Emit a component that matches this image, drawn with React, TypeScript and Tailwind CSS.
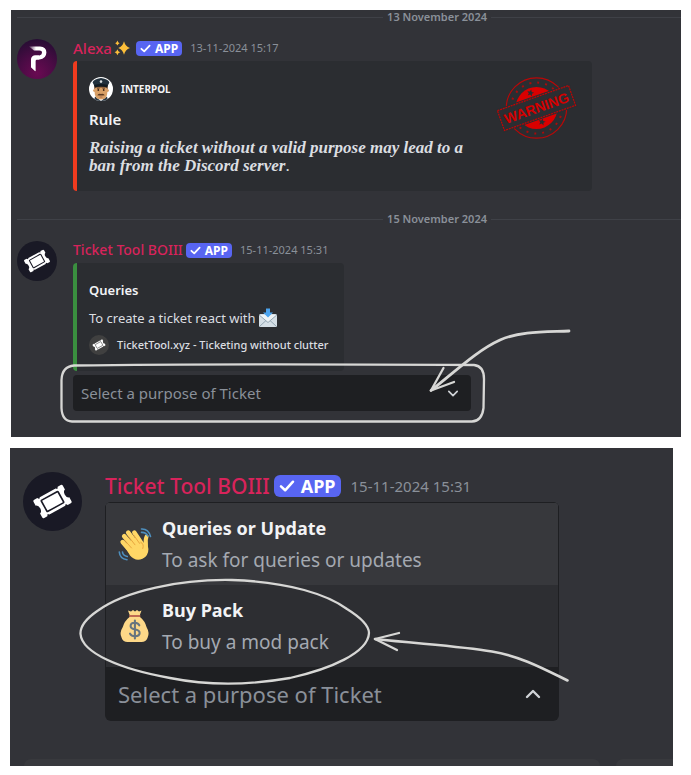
import React from "react";

const sans = "font-['Noto_Sans','Open_Sans',sans-serif]";

function TicketAvatar({ className, bg }: { className: string; bg: string }) {
  return (
    <svg viewBox="0 0 40 40" className={className} aria-hidden="true">
      <circle cx="20" cy="20" r="20" fill={bg} />
      <g transform="rotate(-29 20 20) translate(20 20) scale(0.9) translate(-20 -20)">
        <path
          d="M8.6 12.2H11.2L12.2 13.5L13.2 12.5H26.8L27.8 13.5L28.8 12.2H31.4Q32.6 12.2 32.6 13.4V16.6Q30.6 17.2 30.6 20T32.6 23.4V26.6Q32.6 27.8 31.4 27.8H28.8L27.8 26.5L26.8 27.500H13.2L12.2 26.5L11.2 27.8H8.6Q7.4 27.8 7.4 26.6V23.4Q9.4 22.8 9.4 20T7.4 16.6V13.4Q7.4 12.2 8.6 12.2Z"
          fill="#fff"
        />
        <rect x="12.8" y="15.200" width="14.4" height="9.6" rx="0.6" fill="none" stroke={bg} strokeWidth="1.2" />
      </g>
    </svg>
  );
}

function AlexaAvatar() {
  return (
    <svg viewBox="0 0 40 40" className="size-10 shrink-0" aria-hidden="true">
      <defs>
        <radialGradient id="alexa-bg" cx="0.5" cy="0.85" r="0.85">
          <stop offset="0" stopColor="#6a0a52" />
          <stop offset="0.5" stopColor="#4b0b45" />
          <stop offset="1" stopColor="#260d33" />
        </radialGradient>
        <linearGradient id="alexa-p" x1="0" x2="1" y1="0" y2="0">
          <stop offset="0" stopColor="#fff" stopOpacity="0.15" />
          <stop offset="0.4" stopColor="#fff" />
        </linearGradient>
      </defs>
      <circle cx="20" cy="20" r="20" fill="url(#alexa-bg)" />
      <path d="M12 7.6H23Q29.4 8 29.4 13.6Q29.2 20 22.5 20.4H19.6Q18.4 20.6 18.4 22V32.2L14 28.2V20.5Q14.2 16.6 18 16.4H22.4Q25 16.2 25 13.8T22.4 11.4H17Z" fill="url(#alexa-p)" />
      <path d="M14 28.2V20.5Q14.2 16.6 18 16.4H22V20.4H19.6Q18.4 20.6 18.4 22V32.2Z" fill="#fff" />
    </svg>
  );
}

function Sparkles() {
  return (
    <svg viewBox="0 0 16 16" className="size-4 shrink-0" role="img" aria-label="sparkles">
      <g fill="#fdbf3a">
        <path d="M10 1.200Q11.2 6.2 16 8Q11.2 9.6 10 14.800Q8.8 9.6 4.2 8Q8.8 6.2 10 1.200Z" />
        <path d="M3.4 9.2Q4 11.6 6.2 12.2Q4 12.8 3.4 15.2Q2.8 12.8 0.6 12.2Q2.8 11.6 3.4 9.2Z" />
        <path d="M3.4 0.6Q3.9 2.6 5.6 3.2Q3.9 3.8 3.4 5.6Q2.9 3.8 1.2 3.2Q2.9 2.6 3.4 0.6Z" />
      </g>
    </svg>
  );
}

function Officer() {
  return (
    <svg viewBox="0 0 24 24" className="size-6 shrink-0" aria-hidden="true">
      <clipPath id="officer-clip">
        <circle cx="12" cy="12" r="12" />
      </clipPath>
      <g clipPath="url(#officer-clip)">
        <rect width="24" height="24" fill="#fff" />
        <path d="M6 19.5L12 24L18 19.5L19 24H5Z" fill="#2b3945" />
        <path d="M5.6 9H18.4V15Q18.4 22.6 12 22.6T5.6 15Z" fill="#d9a066" />
        <circle cx="5.4" cy="13.6" r="1.3" fill="#d9a066" />
        <circle cx="18.6" cy="13.6" r="1.3" fill="#d9a066" />
        <path d="M5.4 8H18.6V12.6L17.4 10.6H6.6L5.4 12.6Z" fill="#5d3a22" />
        <path d="M3.6 5.6Q4.2 2 12 1Q19.8 2 20.4 5.6L18.8 8.6H5.2Z" fill="#22313d" />
        <path d="M5 8Q12 6 19 8L18.2 10.6Q12 8.6 5.8 10.6Z" fill="#111b23" />
        <circle cx="12" cy="4.6" r="1.3" fill="#d8dde0" />
        <circle cx="9.3" cy="13" r="0.9" fill="#3a2417" />
        <circle cx="14.7" cy="13" r="0.9" fill="#3a2417" />
        <path d="M8 11.3H10.6M13.4 11.3H16" stroke="#5d3a22" strokeWidth="0.8" />
        <path d="M8.2 18.2Q10 16.2 12 17Q14 16.2 15.8 18.2Q12 18.8 8.2 18.2Z" fill="#5d3a22" />
        <path d="M10.6 20H13.4" stroke="#a0614a" strokeWidth="0.8" />
      </g>
    </svg>
  );
}

function Star({ x, y }: { x: number; y: number }) {
  return (
    <path
      transform={`translate(${x} ${y}) rotate(12)`}
      d="M0-3.6L1-1.2L3.5-1.1L1.6 0.5L2.2 3L0 1.6L-2.2 3L-1.6 0.5L-3.5-1.1L-1-1.2Z"
      fill="#2b2d31"
    />
  );
}

function WarningStamp() {
  return (
    <svg viewBox="0 0 82 62" className="h-[62px] w-[82px] shrink-0" role="img" aria-label="Warning stamp">
      <circle cx="40.500" cy="31" r="30.200" fill="none" stroke="#b80808" strokeWidth="1.200" />
      <circle cx="40.500" cy="31" r="25.500" fill="none" stroke="#a60c0c" strokeWidth="2" strokeDasharray="2 6.010" />
      <circle cx="40.500" cy="31" r="21" fill="#d90000" />
      <Star x={34.5} y={16} />
      <Star x={46} y={45} />
      <g transform="rotate(-19.500 40.500 31)">
        <rect x="1.500" y="19" width="78" height="24" fill="#2b2d31" />
        <rect x="2.800" y="20.500" width="75.400" height="21" fill="#2b2d31" stroke="#c00505" strokeWidth="1.200" strokeDasharray="2 0.800" />
        <text x="40.500" y="36" textAnchor="middle" fontFamily="Liberation Sans, Arial, sans-serif" fontSize="14" fontWeight="700" fill="#d40000">
          WARNING
        </text>
      </g>
    </svg>
  );
}

function Envelope() {
  return (
    <svg viewBox="0 0 20 20" className="size-5 shrink-0" role="img" aria-label="incoming envelope">
      <rect x="1" y="6" width="18" height="13" rx="1.500" fill="#d5dfe6" />
      <path d="M1.500 18.500L8 12.500M18.500 18.500L12 12.500" stroke="#93a6b3" strokeWidth="1" />
      <path d="M1.200 7L10 14.500L18.800 7" fill="#edf2f5" stroke="#93a6b3" strokeWidth="1" />
      <path d="M8 0.500H12V4.500H15L10 9.500L5 4.500H8Z" fill="#4ba3ee" />
    </svg>
  );
}

function Wave() {
  return (
    <svg viewBox="0 0 34 34" className="size-[34px] shrink-0" aria-hidden="true">
      <g stroke="#ffd766" strokeLinecap="round" fill="none">
        <path d="M4.600 15L14 26" strokeWidth="4.400" />
        <path d="M6.200 9.200L18 23" strokeWidth="4.600" />
        <path d="M10.200 5.600L21 20" strokeWidth="4.600" />
        <path d="M16.300 5.500L24 17" strokeWidth="4.400" />
        <path d="M28.600 9.500Q27 13 27.800 19" strokeWidth="4" />
      </g>
      <path d="M6 18L20 9L25.500 16.500L29.700 13Q29.500 18 30.400 22Q30.500 29 24.500 31.800Q17 34.500 12 28.500Z" fill="#ffd766" />
      <path d="M6.600 13.200L13.500 21M10.500 9.500L17 17.800M15.800 8.200L21.600 16.400M22.800 15.300Q26.500 17 24.800 21.500" stroke="#e5a03a" strokeWidth="0.900" fill="none" strokeLinecap="round" />
      <g stroke="#4e8fbe" strokeWidth="1.600" fill="none" strokeLinecap="round">
        <path d="M23.500 2Q30.500 1.700 32.500 9.500" />
        <path d="M23.500 5.400Q28 5.200 29.800 9" />
        <path d="M1.300 25Q1.800 31.700 9 32.700" />
        <path d="M4.500 25Q5 28.700 9.300 29.500" />
      </g>
    </svg>
  );
}

function MoneyBag() {
  return (
    <svg viewBox="0 0 34 34" className="size-[34px] shrink-0" aria-hidden="true">
      <path d="M10 1.500L13 2.500L15 1L17 2.500L19 1L21 2.500L23.500 1.500L21.500 7H12Z" fill="#fdd888" />
      <path d="M11.500 8H22Q27 12 28.500 18Q32 24 29.500 29Q28 33 23.500 33H9.500Q5 33 3.700 29Q1 24 4.800 18Q6.500 12 11.500 8Z" fill="#fdd888" />
      <rect x="11" y="6" width="11.500" height="2" rx="1" fill="#bf6952" />
      <path d="M21.300 16.300Q20 13.800 16.800 13.800Q12.600 13.800 12.600 17Q12.600 19.500 16.800 20.300Q21.600 21.200 21.600 24Q21.600 27.200 17 27.200Q13.300 27.200 12 24.600M16.900 11.500V29.500" stroke="#67757f" strokeWidth="2.100" fill="none" strokeLinecap="round" />
    </svg>
  );
}

function Check({ className }: { className: string }) {
  return (
    <svg viewBox="0 0 12 12" className={className} aria-hidden="true">
      <path d="M1.500 6.300L4.600 9.200L10.500 2.800" fill="none" stroke="#fff" strokeWidth="1.900" strokeLinecap="round" strokeLinejoin="round" />
    </svg>
  );
}

function Chevron({ className, up }: { className: string; up?: boolean }) {
  return (
    <svg viewBox="0 0 16 10" className={className} aria-hidden="true">
      <path d={up ? "M2 8L8 2L14 8" : "M2 2L8 8L14 2"} fill="none" stroke="#d0d3d7" strokeWidth="2.400" strokeLinecap="round" strokeLinejoin="round" />
    </svg>
  );
}

function AppBadge() {
  return (
    <span className="flex h-[15px] items-center gap-1 rounded-sm bg-[#5865f2] px-1 text-[12px] leading-[15px] font-bold text-white">
      <Check className="size-[11px]" />
      APP
    </span>
  );
}

function DateDivider({ children }: { children: React.ReactNode }) {
  return (
    <div className="ml-1.5 flex h-3.5 items-center gap-1">
      <span className="h-px flex-[368] bg-[#3f4147]" />
      <span className="text-[11px] leading-[14px] font-semibold text-[#8a9099]">{children}</span>
      <span className="h-px flex-[191] bg-[#3f4147]" />
    </div>
  );
}

export default function App() {
  return (
    <main className={`bg-white pt-2.5 pb-2.5 ${sans}`}>
      <section className="relative mr-2.5 ml-[11px] bg-[#323338] pb-[26px]">
        <DateDivider>13 November 2024</DateDivider>

        <article className="mt-[15px] flex gap-4 pl-1.5">
          <AlexaAvatar />
          <div className="min-w-0 flex-1">
            <header className="flex h-[18px] items-center">
              <span className="text-[15px] leading-[18px] font-medium text-[#d8235b]">Alexa</span>
              <span className="ml-0.5"><Sparkles /></span>
              <span className="ml-1.5"><AppBadge /></span>
              <time className="ml-2 text-[11px] leading-[18px] text-[#8a9099]">13-11-2024 15:17</time>
            </header>
            <div className="mt-1 flex max-w-[519px] items-start justify-between rounded border-l-4 border-[#f03b1f] bg-[#2b2d31] py-4 pr-3.5 pl-3">
              <div className="max-w-[392px]">
                <div className="flex items-center gap-2">
                  <Officer />
                  <span className="text-[10px] leading-4 font-bold text-[#f2f3f5]">INTERPOL</span>
                </div>
                <h2 className="mt-2 text-[15px] leading-5 font-semibold text-[#f2f3f5]">Rule</h2>
                <p className="mt-2.5 font-['Liberation_Serif',serif] text-[17px] leading-[18px] text-[#dbdee1]">
                  <strong className="italic">Raising a ticket without a valid purpose may lead to a<br />ban from the Discord server</strong>.
                </p>
              </div>
              <WarningStamp />
            </div>
          </div>
        </article>

        <div className="pt-[21px]">
          <DateDivider>15 November 2024</DateDivider>
        </div>

        <article className="mt-[15px] flex gap-4 pl-1.5">
          <TicketAvatar className="size-10 shrink-0" bg="#191925" />
          <div className="min-w-0 flex-1">
            <header className="flex h-[18px] items-center">
              <span className="text-[14px] leading-[18px] font-medium text-[#d8235b]">Ticket Tool BOIII</span>
              <span className="ml-[3px]"><AppBadge /></span>
              <time className="ml-2 text-[11px] leading-[18px] text-[#8a9099]">15-11-2024 15:31</time>
            </header>
            <div className="mt-1 w-[271px] rounded border-l-4 border-[#3a8f3f] bg-[#2b2d31] pt-4 pr-3 pb-4 pl-3">
              <h2 className="text-[13px] leading-[22px] font-semibold text-[#f2f3f5]">Queries</h2>
              <p className="mt-1.5 flex items-center gap-0.5 text-[13px] leading-[22px] whitespace-nowrap text-[#dbdee1]">
                To create a ticket react with <Envelope />
              </p>
              <div className="mt-1.5 flex items-center gap-2">
                <TicketAvatar className="size-5 shrink-0" bg="#404040" />
                <span className="text-[11px] leading-5 font-medium whitespace-nowrap text-[#dbdee1]">TicketTool.xyz - Ticketing without clutter</span>
              </div>
            </div>
            <div className="mt-1 flex w-[398px] items-center rounded bg-[#1e1f22]">
              <select aria-label="Select a purpose of Ticket" className="h-9 flex-1 appearance-none bg-transparent pl-2 text-[15px] text-[#8a9099] outline-none">
                <option>Select a purpose of Ticket</option>
                <option>Queries or Update</option>
                <option>Buy Pack</option>
              </select>
              <Chevron className="mr-3 h-[7px] w-3" />
            </div>
          </div>
        </article>

        <svg viewBox="11 10 670 426" className="pointer-events-none absolute top-0 left-0 h-[426px] w-[670px]" fill="none" stroke="#d7d7d5" strokeLinecap="round" strokeLinejoin="round" aria-hidden="true">
          <path d="M74 365.500Q220 363.500 474 365Q484 366 484 379L483.500 408Q482 421 472 421.500Q300 422 72 421.500Q62 421 61.500 408V380Q62 366.500 74 365.500Z" strokeWidth="2.300" />
          <path d="M569 331C545 332 520 331 500 340C478 350 458 369 431 390.500" strokeWidth="2.800" />
          <path d="M443.500 368L431 390.500L454 382" strokeWidth="2.300" />
        </svg>
      </section>

      <section className="relative mt-[11px] mr-[18px] ml-2.5 overflow-hidden bg-[#323338] pt-6">
        <article className="flex gap-[23px] pl-[13px]">
          <TicketAvatar className="size-[59px] shrink-0" bg="#191925" />
          <div className="w-[454px]">
            <header className="flex h-7 items-center">
              <span className="text-[21px] leading-7 font-medium text-[#d8235b]">Ticket Tool BOIII</span>
              <span className="ml-1 flex h-[22px] items-center gap-1.5 rounded-md bg-[#5865f2] px-[5px] text-[18px] leading-[22px] font-bold text-white">
                <Check className="size-4" />
                APP
              </span>
              <time className="ml-2.5 text-[15px] leading-7 text-[#8a9099]">15-11-2024 15:31</time>
            </header>
            <div className="mt-0.5 overflow-hidden rounded-md bg-[#1e1f22]">
              <div role="listbox" aria-label="Ticket purposes" className="flex flex-col rounded-t-md border border-b-0 border-[#1e1f22]">
                <button type="button" role="option" aria-selected="true" className="flex h-[82px] items-center gap-2.5 bg-[#37383c] pl-3 text-left">
                  <Wave />
                  <span className="flex flex-col">
                    <span className="text-[18px] leading-8 font-bold text-[#f2f3f5]">Queries or Update</span>
                    <span className="text-[19px] leading-8 text-[#a4a9b1]">To ask for queries or updates</span>
                  </span>
                </button>
                <button type="button" role="option" aria-selected="false" className="flex h-[82px] items-center gap-2.5 bg-[#2d2e32] pl-3 text-left">
                  <MoneyBag />
                  <span className="flex flex-col">
                    <span className="text-[18px] leading-8 font-bold text-[#f2f3f5]">Buy Pack</span>
                    <span className="text-[19px] leading-8 text-[#a4a9b1]">To buy a mod pack</span>
                  </span>
                </button>
              </div>
              <div className="flex items-center">
                <select aria-label="Select a purpose of Ticket, open" className="h-[54px] flex-1 appearance-none bg-transparent pl-[13px] text-[22px] text-[#8a9099] outline-none">
                  <option>Select a purpose of Ticket</option>
                  <option>Queries or Update</option>
                  <option>Buy Pack</option>
                </select>
                <Chevron up className="mr-[18px] h-2.5 w-4" />
              </div>
            </div>
          </div>
        </article>

        <div className="mt-[38px] ml-3.5 flex h-[7px] gap-4">
          <span className="flex-[577] rounded-t-lg bg-[#38393d]" />
          <span className="flex-[57] rounded-tl-lg bg-[#38393d]" />
        </div>

        <svg viewBox="10 447 663 318" className="pointer-events-none absolute top-0 left-0 h-[318px] w-[663px]" fill="none" stroke="#d7d7d5" strokeLinecap="round" strokeLinejoin="round" aria-hidden="true">
          <path d="M98 609.500C125 590 180 578 232 579C290 581 328 594 347 608C363 618 369 625 369 632C368 652 330 668 290 677C250 684 210 685 170 677C120 668 82 652 80.500 633C80 625 87 617 98 609.500Z" strokeWidth="2.300" />
          <path d="M375 638C420 643 460 645 492 650.500C520 655 544 668 567.500 679.500" strokeWidth="2.600" />
          <path d="M399 632L375 638L397 649" strokeWidth="2.300" />
        </svg>
      </section>
    </main>
  );
}
